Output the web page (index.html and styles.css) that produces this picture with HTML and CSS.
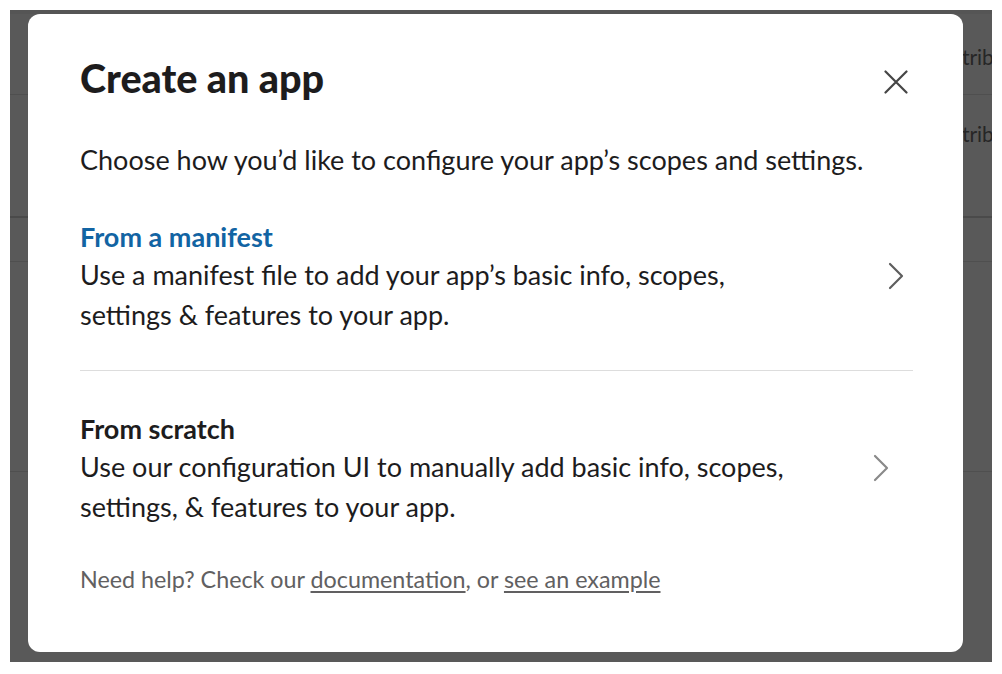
FILE: index.html
```html
<!DOCTYPE html>
<html lang="en">
<head>
<meta charset="utf-8">
<title>Create an app</title>
<link rel="stylesheet" href="styles.css">
</head>
<body>
<div class="screen">
  <div class="backdrop">
    <div class="page">
      <div class="row row-a"><span class="cell">Distribution</span></div>
      <div class="row row-b"><span class="cell">Distribution</span></div>
      <div class="row row-c"></div>
      <div class="row row-d"></div>
      <div class="row row-e"></div>
    </div>
    <div class="modal" role="dialog" aria-labelledby="title">
      <header class="modal-head">
        <h1 id="title" class="modal-title">Create an app</h1>
        <button class="close" aria-label="Close">
          <svg width="24" height="24" viewBox="0 0 24 24"><path d="M1.5 1.5 L22.5 22.5 M22.5 1.5 L1.5 22.5" stroke="#454545" stroke-width="2.2" stroke-linecap="round" fill="none"/></svg>
        </button>
      </header>
      <p class="intro">Choose how you’d like to configure your app’s scopes and settings.</p>
      <a class="option option-manifest" href="#">
        <div class="option-text">
          <div class="option-title blue">From a manifest</div>
          <div class="option-desc">Use a manifest file to add your app’s basic info, scopes,<br>settings &amp; features to your app.</div>
        </div>
        <svg class="chev chev-dark" width="16" height="28" viewBox="0 0 16 28"><path d="M2 2 L14 14 L2 26" stroke="#5e5e5e" stroke-width="2.2" stroke-linecap="round" stroke-linejoin="round" fill="none"/></svg>
      </a>
      <div class="divider"></div>
      <a class="option option-scratch" href="#">
        <div class="option-text">
          <div class="option-title">From scratch</div>
          <div class="option-desc">Use our configuration UI to manually add basic info, scopes,<br>settings, &amp; features to your app.</div>
        </div>
        <svg class="chev chev-light" width="16" height="28" viewBox="0 0 16 28"><path d="M2 2 L14 14 L2 26" stroke="#8a8a8a" stroke-width="2.2" stroke-linecap="round" stroke-linejoin="round" fill="none"/></svg>
      </a>
      <p class="help">Need help? Check our <a href="#">documentation</a>, or <a href="#">see an example</a></p>
    </div>
  </div>
</div>
</body>
</html>
```
FILE: styles.css
```css
* { box-sizing: border-box; }
html, body { margin: 0; padding: 0; background: #ffffff; }
body { font-family: Lato, "Noto Sans", "Liberation Sans", sans-serif; }

.screen {
  width: 1002px;
  height: 674px;
  padding: 10px 10px 12px 10px;
}

.backdrop {
  position: relative;
  width: 100%;
  height: 100%;
  background: #595959;
  overflow: hidden;
}

.page { display: flex; flex-direction: column; }
.row {
  border-bottom: 1px solid #4f4f4f;
  padding-left: 922px;
  white-space: nowrap;
  overflow: hidden;
  display: flex;
  align-items: flex-start;
}
.cell { color: #262626; font-size: 21px; line-height: 24px; }
.row-a { height: 85px; border-top: 4px solid #555; padding-top: 31px; }
.row-b { height: 123px; border-bottom: 2px solid #4a4a4a; padding-top: 27px; }
.row-c { height: 44px; }
.row-d { height: 210px; }
.row-e { height: 190px; border-bottom: none; }

.modal {
  position: absolute;
  left: 18px;
  top: 4px;
  width: 935px;
  height: 638px;
  background: #ffffff;
  border-radius: 12px;
  padding: 40px 50px 0 52px;
  color: #1d1c1d;
  display: flex;
  flex-direction: column;
}

.modal-head {
  display: flex;
  align-items: flex-start;
  justify-content: space-between;
}
.modal-title {
  margin: 0;
  font-size: 39.5px;
  line-height: 48px;
  font-weight: 900;
}
.close {
  border: 0;
  background: none;
  padding: 0;
  margin: 16px 5px 0 0;
  width: 24px;
  height: 24px;
  display: flex;
  cursor: pointer;
}

.intro {
  margin: 38px 0 0;
  font-size: 27px;
  line-height: 40px;
}

.option {
  display: flex;
  align-items: center;
  justify-content: space-between;
  text-decoration: none;
  color: inherit;
}
.option-manifest { margin-top: 39px; }
.option-title {
  font-size: 27px;
  font-weight: 700;
  line-height: 36px;
}
.option-title.blue { color: #1264a3; }
.option-desc {
  font-size: 27px;
  line-height: 40px;
}
.chev { position: relative; top: -1px; }
.chev-dark { margin-right: 9px; }
.chev-light { margin-right: 24px; }

.divider {
  height: 1px;
  background: #dddddd;
  margin: 35px 0 40px;
}

.help {
  margin: 37px 0 0;
  font-size: 23.3px;
  line-height: 30px;
  color: #616061;
}
.help a { color: #616061; text-decoration: underline; text-underline-offset: 3px; }
```
